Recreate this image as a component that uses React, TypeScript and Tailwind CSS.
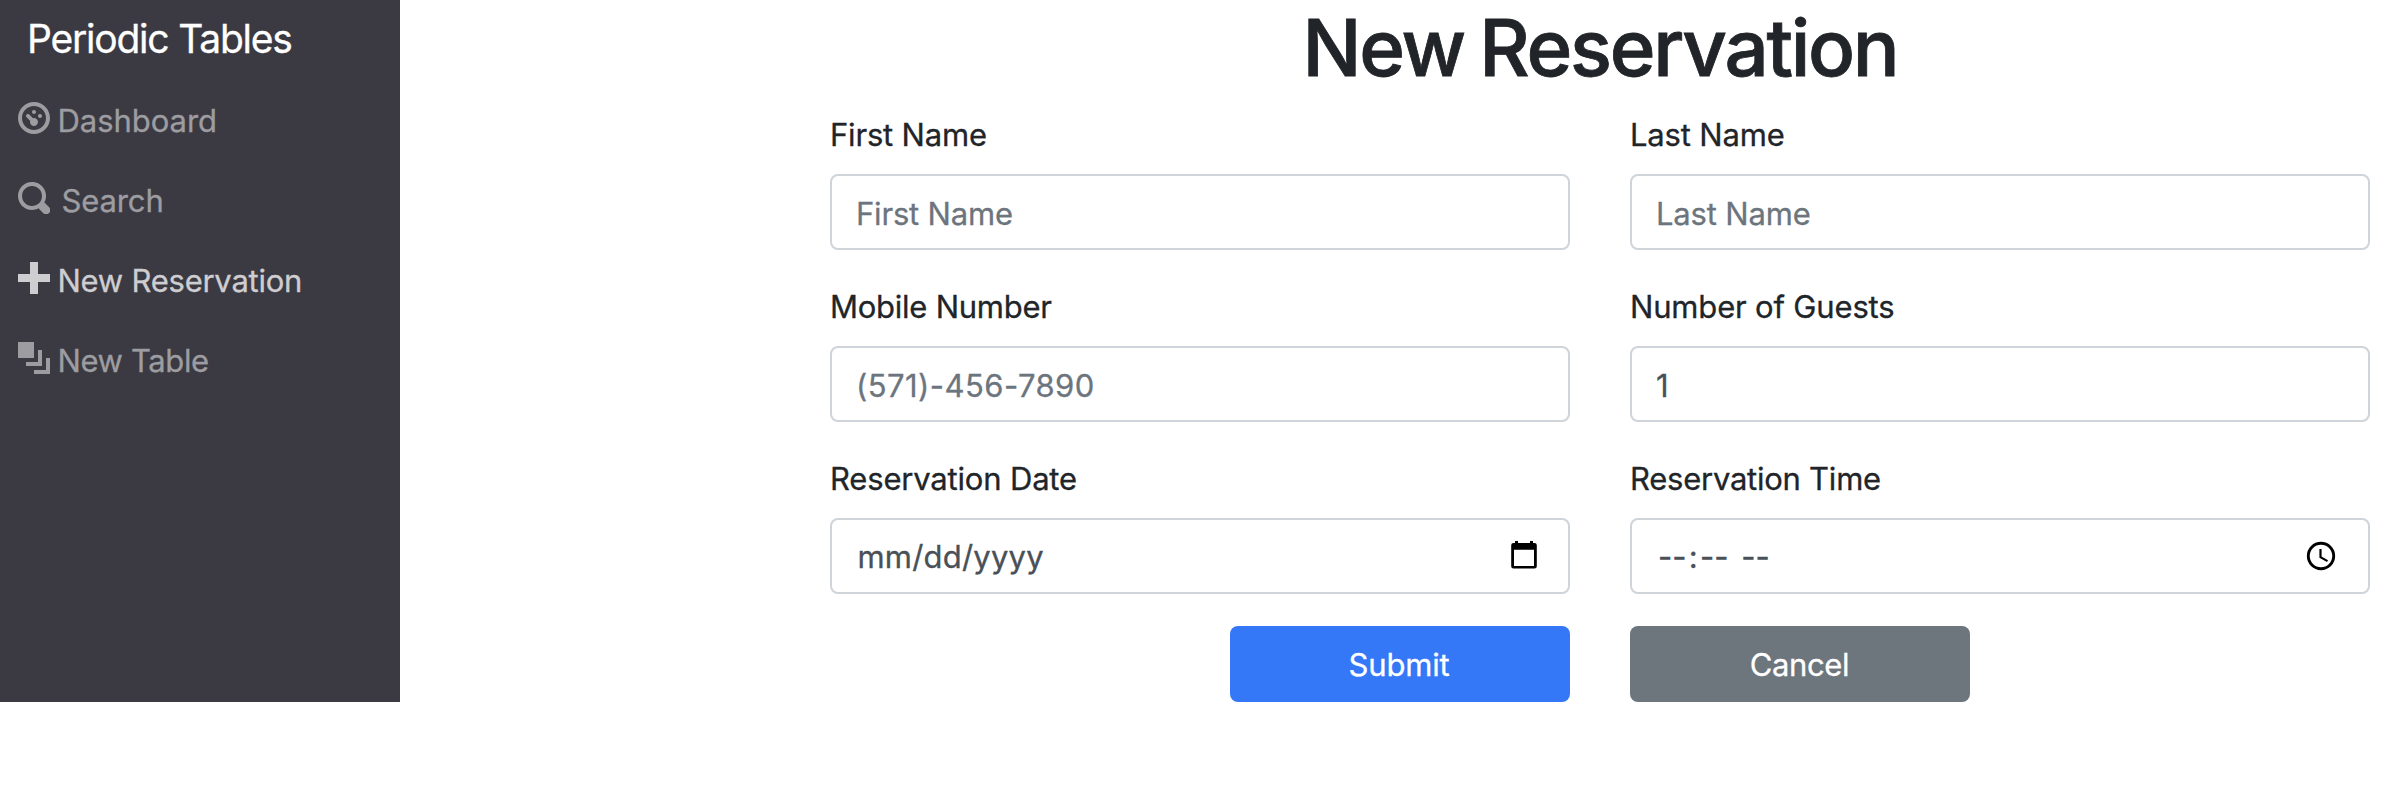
import type { ReactNode } from "react";

const icons = {
  dashboard:
    "M4 0c-2.2 0-4 1.8-4 4s1.8 4 4 4 4-1.8 4-4-1.8-4-4-4zm0 1c1.66 0 3 1.34 3 3s-1.34 3-3 3-3-1.34-3-3 1.34-3 3-3zm0 1c-.28 0-.5.22-.5.5s.22.5.5.5.5-.22.5-.5-.22-.5-.5-.5zm-1.66 1a.5.5 0 0 0-.19.84l.91.91c-.02.08-.06.16-.06.25 0 .55.45 1 1 1s1-.45 1-1-.45-1-1-1c-.09 0-.17.04-.25.06l-.91-.91a.5.5 0 0 0-.44-.16.5.5 0 0 0-.06 0zm3.16 0c-.28 0-.5.22-.5.5s.22.5.5.5.5-.22.5-.5-.22-.5-.5-.5z",
  search:
    "M3.5 0c-1.93 0-3.5 1.57-3.5 3.5s1.57 3.5 3.5 3.5c.59 0 1.17-.14 1.66-.41a1 1 0 0 0 .13.13l1 1a1.02 1.02 0 1 0 1.44-1.44l-1-1a1 1 0 0 0-.16-.13c.27-.49.44-1.06.44-1.66 0-1.93-1.55-3.5-3.5-3.5zm.01 1c1.39 0 2.49 1.1 2.49 2.5 0 .66-.24 1.27-.66 1.72l-.03.03a1 1 0 0 0-.13.13c-.44.4-1.04.63-1.69.63-1.39 0-2.48-1.1-2.48-2.5s1.1-2.5 2.48-2.5z",
  plus: "M3 0v3h-3v2h3v3h2v-3h3v-2h-3v-3h-2z",
  layers: "M0 0v4h4v-4h-4zm5 2v3h-3v1h4v-4h-1zm2 2v3h-3v1h4v-4h-1z",
};

function NavItem({ icon, label, className }: { icon: keyof typeof icons; label: string; className: string }) {
  return (
    <li>
      <a href="#" className={`flex h-20 items-center pl-[18px] text-[31px] ${className}`}>
        <svg viewBox="0 0 8 8" className="mb-1 size-8 shrink-0 fill-current">
          <path d={icons[icon]} />
        </svg>
        <span className="pt-0.5 whitespace-nowrap">{label}</span>
      </a>
    </li>
  );
}

function Field({ label, tracking, children }: { label: string; tracking: string; children: ReactNode }) {
  return (
    <label className="block">
      <span className={`mb-4 block h-12 pt-px text-[31px] leading-[48px] ${tracking}`}>{label}</span>
      {children}
    </label>
  );
}

const control =
  "flex h-[76px] w-full items-center rounded-lg border-2 border-[#ced4da] bg-white pt-0.5 pl-6 text-[31px] text-[#495057] outline-none placeholder:text-[#6c757d] placeholder:opacity-100";

function CalendarIcon() {
  return (
    <svg viewBox="0 0 32 32" className="mr-7 mb-1 size-8 text-black">
      <path
        fill="currentColor"
        fillRule="evenodd"
        d="M7 2h3v2h12V2h3v2h1.500a2.300 2.300 0 0 1 2.300 2.300v20.900a2.300 2.300 0 0 1-2.300 2.300h-21a2.300 2.300 0 0 1-2.300-2.300v-20.900a2.300 2.300 0 0 1 2.300-2.300h1.500zM6 10.800v16.200h20v-16.200z"
      />
    </svg>
  );
}

function ClockIcon() {
  return (
    <svg viewBox="0 0 32 32" className="mr-[31px] mb-0.5 size-8 text-black" fill="none" stroke="currentColor">
      <circle cx="16" cy="16" r="12.700" strokeWidth="2.900" />
      <path d="M15.500 9v8.200l7 3.900" strokeWidth="2.200" />
    </svg>
  );
}

export default function App() {
  return (
    <div className="flex h-[790px] w-[2388px] items-start overflow-hidden bg-white font-['Inter',sans-serif] text-[#212529] [-webkit-text-stroke-width:0.3px]">
      <nav className="h-[702px] w-[400px] shrink-0 bg-[#3b3a43]">
        <a href="#" className="mb-0.5 flex h-[78px] items-center pl-[27px] text-[39px] tracking-[-1.22px] whitespace-nowrap text-white">
          Periodic Tables
        </a>
        <ul>
          <NavItem icon="dashboard" label="Dashboard" className="gap-[7.500px] tracking-[-0.04px] text-[#9d9da1]" />
          <NavItem icon="search" label="Search" className="gap-[11.500px] tracking-[-0.12px] text-[#9d9da1]" />
          <NavItem icon="plus" label="New Reservation" className="gap-[7.500px] tracking-[-0.25px] text-[#cecdd0]" />
          <NavItem icon="layers" label="New Table" className="gap-[7.500px] tracking-[-0.38px] text-[#9d9da1]" />
        </ul>
      </nav>
      <main className="ml-[430px] w-[1540px]">
        <h1 className="mb-3.5 h-24 text-center text-[78px] leading-[96px] font-medium tracking-[-2.3px] whitespace-nowrap [-webkit-text-stroke-width:0.8px] [word-spacing:-3px]">
          New Reservation
        </h1>
        <form className="grid grid-cols-2 gap-x-[60px] gap-y-8" onSubmit={(e) => e.preventDefault()}>
          <Field label="First Name" tracking="tracking-[-0.18px]">
            <input className={`${control} tracking-[-0.18px]`} placeholder="First Name" />
          </Field>
          <Field label="Last Name" tracking="tracking-[-0.17px]">
            <input className={`${control} tracking-[-0.17px]`} placeholder="Last Name" />
          </Field>
          <Field label="Mobile Number" tracking="tracking-[-0.25px]">
            <input className={`${control} tracking-[0.44px]`} placeholder="(571)-456-7890" />
          </Field>
          <Field label="Number of Guests" tracking="tracking-[-0.17px]">
            <input className={control} defaultValue="1" />
          </Field>
          <Field label="Reservation Date" tracking="tracking-[-0.18px]">
            <span className={`${control} justify-between`}>
              <span className="pl-[1.500px] tracking-[0.2px]">mm/dd/yyyy</span>
              <CalendarIcon />
            </span>
          </Field>
          <Field label="Reservation Time" tracking="tracking-[-0.25px]">
            <span className={`${control} justify-between`}>
              <span className="pl-0.5 [word-spacing:4px]">
                --<span className="px-[2.300px]">:</span>-- --
              </span>
              <ClockIcon />
            </span>
          </Field>
          <button type="submit" className="h-[76px] w-[340px] justify-self-end rounded-lg bg-[#3578f7] pt-0.5 pr-0.5 text-[31px] tracking-[-0.17px] text-white">
            Submit
          </button>
          <button type="button" className="h-[76px] w-[340px] rounded-lg bg-[#6d757d] pt-0.5 pr-px text-[31px] tracking-[-0.37px] text-white">
            Cancel
          </button>
        </form>
      </main>
    </div>
  );
}
